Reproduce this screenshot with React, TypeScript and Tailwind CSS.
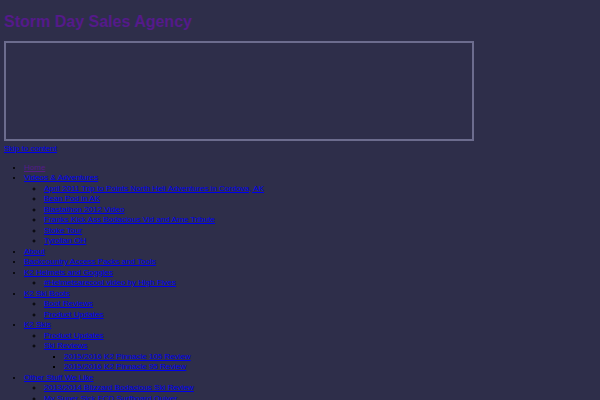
import React from "react";

type Item = { label: string; visited?: boolean; children?: Item[] };

const menu: Item[] = [
  { label: "Home", visited: true },
  {
    label: "Videos & Adventures",
    children: [
      { label: "April 2011 Trip to Points North Heli Adventures in Cordova, AK" },
      { label: "Bean Pod in AK" },
      { label: "Blastathon 2012 Video" },
      { label: "Franks Kick Ass Bodacious Vid and Arne Tribute" },
      { label: "Stoke Tour" },
      { label: "Tyrolian OH" },
    ],
  },
  { label: "About" },
  { label: "Backcountry Access Packs and Tools" },
  {
    label: "K2 Helmets and Goggles",
    children: [{ label: "#Helmetsarecool video by High Fives" }],
  },
  {
    label: "K2 Ski Boots",
    children: [{ label: "Boot Reviews" }, { label: "Product Updates" }],
  },
  {
    label: "K2 Skis",
    children: [
      { label: "Product Updates" },
      {
        label: "Ski Reviews",
        children: [
          { label: "2015/2016 K2 Pinnacle 105 Review" },
          { label: "2015/2016 K2 Pinnacle 95 Review" },
        ],
      },
    ],
  },
  {
    label: "Other Stuff We Like",
    children: [
      { label: "2013/2014 Blizzard Bodacious Ski Review" },
      { label: "My Super Sick FCD Surfboard Quiver" },
    ],
  },
];

function List({ items, level }: { items: Item[]; level: number }) {
  const cls =
    level === 0
      ? "list-disc pl-[20px] my-[8px]"
      : level === 1
      ? "list-[circle] pl-[20px]"
      : "list-[square] pl-[20px]";
  return (
    <ul className={cls}>
      {items.map((it, i) => (
        <li key={i} className="marker:text-black">
          <a
            href="#"
            className={
              it.visited
                ? "text-[#551a8b] underline"
                : "text-[#0000ee] underline"
            }
          >
            {it.label}
          </a>
          {it.children && <List items={it.children} level={level + 1} />}
        </li>
      ))}
    </ul>
  );
}

export default function App() {
  return (
    <div
      className="w-[600px] h-[400px] overflow-hidden bg-[#2e2e4a] px-[4px] text-[8px] leading-[10.5px] text-black"
      style={{ fontFamily: '"Liberation Sans", Arial, sans-serif' }}
    >
      <h1 className="pt-[12px] mb-[9px] text-[16px] font-bold leading-[20px]">
        <a href="#" className="text-[#551a8b] no-underline">
          Storm Day Sales Agency
        </a>
      </h1>
      <div className="w-[470px] h-[100px] border-2 border-[#6c6c8e] mb-[3px]" />
      <a href="#" className="text-[#0000ee] underline block">
        Skip to content
      </a>
      <List items={menu} level={0} />
    </div>
  );
}
